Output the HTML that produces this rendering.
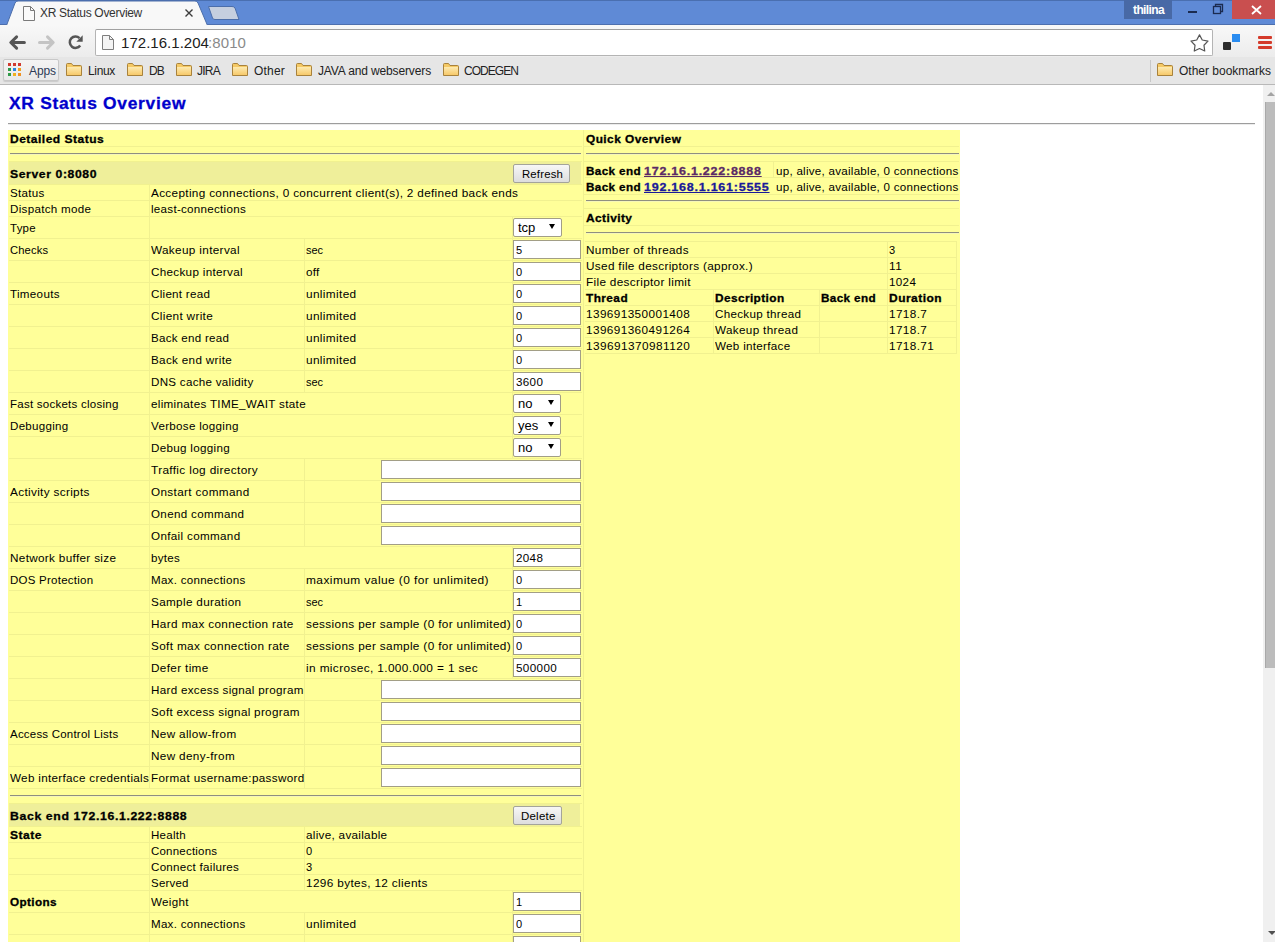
<!DOCTYPE html>
<html><head><meta charset="utf-8"><title>XR Status Overview</title>
<style>
html,body{margin:0;padding:0;width:1275px;height:942px;overflow:hidden;background:#fff}
body{position:relative;font-family:'Liberation Sans', sans-serif}
.t{position:absolute;white-space:pre;line-height:20px;font-family:'Liberation Sans', sans-serif;transform-origin:0 0}
.t.b{-webkit-text-stroke:0.3px currentColor}
</style></head><body>
<div style="position:absolute;left:8px;top:123px;width:1247px;height:1px;background:#9d9d9d"></div>
<div style="position:absolute;left:8px;top:124px;width:1247px;height:1px;background:#ececec"></div>
<div style="position:absolute;left:8px;top:130px;width:575px;height:812px;background:#ffff99"></div>
<div style="position:absolute;left:584px;top:130px;width:376px;height:812px;background:#ffff99"></div>
<div style="position:absolute;left:583px;top:130px;width:1px;height:812px;background:#f1f190"></div>
<div style="position:absolute;left:9px;top:146px;width:573px;height:1px;background:#f1f190"></div>
<div style="position:absolute;left:10px;top:153px;width:571px;height:1px;background:#8f8f80"></div>
<div style="position:absolute;left:10px;top:154px;width:571px;height:1px;background:#f6f6b8"></div>
<div style="position:absolute;left:9px;top:161px;width:573px;height:1px;background:#f1f190"></div>
<div style="position:absolute;left:9px;top:162px;width:572px;height:22px;background:#efef9a"></div>
<div style="position:absolute;left:513px;top:164px;width:55px;height:17px;border:1px solid #a4a49a;border-radius:2px;background:linear-gradient(#f7f7f7,#dddddd)"></div>
<div style="position:absolute;left:9px;top:184px;width:573px;height:1px;background:#f1f190"></div>
<div style="position:absolute;left:149px;top:184px;width:1px;height:16px;background:#f1f190"></div>
<div style="position:absolute;left:9px;top:200px;width:573px;height:1px;background:#f1f190"></div>
<div style="position:absolute;left:149px;top:200px;width:1px;height:16px;background:#f1f190"></div>
<div style="position:absolute;left:9px;top:216px;width:573px;height:1px;background:#f1f190"></div>
<div style="position:absolute;left:149px;top:216px;width:1px;height:22px;background:#f1f190"></div>
<div style="position:absolute;left:512px;top:216px;width:1px;height:22px;background:#f1f190"></div>
<div style="position:absolute;left:513px;top:218px;width:47px;height:17px;border:1px solid #a29e86;border-radius:2px;background:#fff"></div>
<div style="position:absolute;left:548.5px;top:224px;width:0;height:0;border-left:3.5px solid transparent;border-right:3.5px solid transparent;border-top:5.5px solid #000"></div>
<div style="position:absolute;left:9px;top:238px;width:573px;height:1px;background:#f1f190"></div>
<div style="position:absolute;left:149px;top:238px;width:1px;height:22px;background:#f1f190"></div>
<div style="position:absolute;left:304px;top:238px;width:1px;height:22px;background:#f1f190"></div>
<div style="position:absolute;left:512px;top:238px;width:1px;height:22px;background:#f1f190"></div>
<div style="position:absolute;left:513px;top:240px;width:66px;height:17px;border:1px solid #a29e86;background:#fff"></div>
<div style="position:absolute;left:9px;top:260px;width:573px;height:1px;background:#f1f190"></div>
<div style="position:absolute;left:149px;top:260px;width:1px;height:22px;background:#f1f190"></div>
<div style="position:absolute;left:304px;top:260px;width:1px;height:22px;background:#f1f190"></div>
<div style="position:absolute;left:512px;top:260px;width:1px;height:22px;background:#f1f190"></div>
<div style="position:absolute;left:513px;top:262px;width:66px;height:17px;border:1px solid #a29e86;background:#fff"></div>
<div style="position:absolute;left:9px;top:282px;width:573px;height:1px;background:#f1f190"></div>
<div style="position:absolute;left:149px;top:282px;width:1px;height:22px;background:#f1f190"></div>
<div style="position:absolute;left:304px;top:282px;width:1px;height:22px;background:#f1f190"></div>
<div style="position:absolute;left:512px;top:282px;width:1px;height:22px;background:#f1f190"></div>
<div style="position:absolute;left:513px;top:284px;width:66px;height:17px;border:1px solid #a29e86;background:#fff"></div>
<div style="position:absolute;left:9px;top:304px;width:573px;height:1px;background:#f1f190"></div>
<div style="position:absolute;left:149px;top:304px;width:1px;height:22px;background:#f1f190"></div>
<div style="position:absolute;left:304px;top:304px;width:1px;height:22px;background:#f1f190"></div>
<div style="position:absolute;left:512px;top:304px;width:1px;height:22px;background:#f1f190"></div>
<div style="position:absolute;left:513px;top:306px;width:66px;height:17px;border:1px solid #a29e86;background:#fff"></div>
<div style="position:absolute;left:9px;top:326px;width:573px;height:1px;background:#f1f190"></div>
<div style="position:absolute;left:149px;top:326px;width:1px;height:22px;background:#f1f190"></div>
<div style="position:absolute;left:304px;top:326px;width:1px;height:22px;background:#f1f190"></div>
<div style="position:absolute;left:512px;top:326px;width:1px;height:22px;background:#f1f190"></div>
<div style="position:absolute;left:513px;top:328px;width:66px;height:17px;border:1px solid #a29e86;background:#fff"></div>
<div style="position:absolute;left:9px;top:348px;width:573px;height:1px;background:#f1f190"></div>
<div style="position:absolute;left:149px;top:348px;width:1px;height:22px;background:#f1f190"></div>
<div style="position:absolute;left:304px;top:348px;width:1px;height:22px;background:#f1f190"></div>
<div style="position:absolute;left:512px;top:348px;width:1px;height:22px;background:#f1f190"></div>
<div style="position:absolute;left:513px;top:350px;width:66px;height:17px;border:1px solid #a29e86;background:#fff"></div>
<div style="position:absolute;left:9px;top:370px;width:573px;height:1px;background:#f1f190"></div>
<div style="position:absolute;left:149px;top:370px;width:1px;height:22px;background:#f1f190"></div>
<div style="position:absolute;left:304px;top:370px;width:1px;height:22px;background:#f1f190"></div>
<div style="position:absolute;left:512px;top:370px;width:1px;height:22px;background:#f1f190"></div>
<div style="position:absolute;left:513px;top:372px;width:66px;height:17px;border:1px solid #a29e86;background:#fff"></div>
<div style="position:absolute;left:9px;top:392px;width:573px;height:1px;background:#f1f190"></div>
<div style="position:absolute;left:149px;top:392px;width:1px;height:22px;background:#f1f190"></div>
<div style="position:absolute;left:512px;top:392px;width:1px;height:22px;background:#f1f190"></div>
<div style="position:absolute;left:513px;top:394px;width:46px;height:17px;border:1px solid #a29e86;border-radius:2px;background:#fff"></div>
<div style="position:absolute;left:547.5px;top:400px;width:0;height:0;border-left:3.5px solid transparent;border-right:3.5px solid transparent;border-top:5.5px solid #000"></div>
<div style="position:absolute;left:9px;top:414px;width:573px;height:1px;background:#f1f190"></div>
<div style="position:absolute;left:149px;top:414px;width:1px;height:22px;background:#f1f190"></div>
<div style="position:absolute;left:512px;top:414px;width:1px;height:22px;background:#f1f190"></div>
<div style="position:absolute;left:513px;top:416px;width:46px;height:17px;border:1px solid #a29e86;border-radius:2px;background:#fff"></div>
<div style="position:absolute;left:547.5px;top:422px;width:0;height:0;border-left:3.5px solid transparent;border-right:3.5px solid transparent;border-top:5.5px solid #000"></div>
<div style="position:absolute;left:9px;top:436px;width:573px;height:1px;background:#f1f190"></div>
<div style="position:absolute;left:149px;top:436px;width:1px;height:22px;background:#f1f190"></div>
<div style="position:absolute;left:512px;top:436px;width:1px;height:22px;background:#f1f190"></div>
<div style="position:absolute;left:513px;top:438px;width:46px;height:17px;border:1px solid #a29e86;border-radius:2px;background:#fff"></div>
<div style="position:absolute;left:547.5px;top:444px;width:0;height:0;border-left:3.5px solid transparent;border-right:3.5px solid transparent;border-top:5.5px solid #000"></div>
<div style="position:absolute;left:9px;top:458px;width:573px;height:1px;background:#f1f190"></div>
<div style="position:absolute;left:149px;top:458px;width:1px;height:22px;background:#f1f190"></div>
<div style="position:absolute;left:304px;top:458px;width:1px;height:22px;background:#f1f190"></div>
<div style="position:absolute;left:381px;top:460px;width:198px;height:17px;border:1px solid #a29e86;background:#fff"></div>
<div style="position:absolute;left:9px;top:480px;width:573px;height:1px;background:#f1f190"></div>
<div style="position:absolute;left:149px;top:480px;width:1px;height:22px;background:#f1f190"></div>
<div style="position:absolute;left:304px;top:480px;width:1px;height:22px;background:#f1f190"></div>
<div style="position:absolute;left:381px;top:482px;width:198px;height:17px;border:1px solid #a29e86;background:#fff"></div>
<div style="position:absolute;left:9px;top:502px;width:573px;height:1px;background:#f1f190"></div>
<div style="position:absolute;left:149px;top:502px;width:1px;height:22px;background:#f1f190"></div>
<div style="position:absolute;left:304px;top:502px;width:1px;height:22px;background:#f1f190"></div>
<div style="position:absolute;left:381px;top:504px;width:198px;height:17px;border:1px solid #a29e86;background:#fff"></div>
<div style="position:absolute;left:9px;top:524px;width:573px;height:1px;background:#f1f190"></div>
<div style="position:absolute;left:149px;top:524px;width:1px;height:22px;background:#f1f190"></div>
<div style="position:absolute;left:304px;top:524px;width:1px;height:22px;background:#f1f190"></div>
<div style="position:absolute;left:381px;top:526px;width:198px;height:17px;border:1px solid #a29e86;background:#fff"></div>
<div style="position:absolute;left:9px;top:546px;width:573px;height:1px;background:#f1f190"></div>
<div style="position:absolute;left:149px;top:546px;width:1px;height:22px;background:#f1f190"></div>
<div style="position:absolute;left:512px;top:546px;width:1px;height:22px;background:#f1f190"></div>
<div style="position:absolute;left:513px;top:548px;width:66px;height:17px;border:1px solid #a29e86;background:#fff"></div>
<div style="position:absolute;left:9px;top:568px;width:573px;height:1px;background:#f1f190"></div>
<div style="position:absolute;left:149px;top:568px;width:1px;height:22px;background:#f1f190"></div>
<div style="position:absolute;left:304px;top:568px;width:1px;height:22px;background:#f1f190"></div>
<div style="position:absolute;left:512px;top:568px;width:1px;height:22px;background:#f1f190"></div>
<div style="position:absolute;left:513px;top:570px;width:66px;height:17px;border:1px solid #a29e86;background:#fff"></div>
<div style="position:absolute;left:9px;top:590px;width:573px;height:1px;background:#f1f190"></div>
<div style="position:absolute;left:149px;top:590px;width:1px;height:22px;background:#f1f190"></div>
<div style="position:absolute;left:304px;top:590px;width:1px;height:22px;background:#f1f190"></div>
<div style="position:absolute;left:512px;top:590px;width:1px;height:22px;background:#f1f190"></div>
<div style="position:absolute;left:513px;top:592px;width:66px;height:17px;border:1px solid #a29e86;background:#fff"></div>
<div style="position:absolute;left:9px;top:612px;width:573px;height:1px;background:#f1f190"></div>
<div style="position:absolute;left:149px;top:612px;width:1px;height:22px;background:#f1f190"></div>
<div style="position:absolute;left:304px;top:612px;width:1px;height:22px;background:#f1f190"></div>
<div style="position:absolute;left:512px;top:612px;width:1px;height:22px;background:#f1f190"></div>
<div style="position:absolute;left:513px;top:614px;width:66px;height:17px;border:1px solid #a29e86;background:#fff"></div>
<div style="position:absolute;left:9px;top:634px;width:573px;height:1px;background:#f1f190"></div>
<div style="position:absolute;left:149px;top:634px;width:1px;height:22px;background:#f1f190"></div>
<div style="position:absolute;left:304px;top:634px;width:1px;height:22px;background:#f1f190"></div>
<div style="position:absolute;left:512px;top:634px;width:1px;height:22px;background:#f1f190"></div>
<div style="position:absolute;left:513px;top:636px;width:66px;height:17px;border:1px solid #a29e86;background:#fff"></div>
<div style="position:absolute;left:9px;top:656px;width:573px;height:1px;background:#f1f190"></div>
<div style="position:absolute;left:149px;top:656px;width:1px;height:22px;background:#f1f190"></div>
<div style="position:absolute;left:304px;top:656px;width:1px;height:22px;background:#f1f190"></div>
<div style="position:absolute;left:512px;top:656px;width:1px;height:22px;background:#f1f190"></div>
<div style="position:absolute;left:513px;top:658px;width:66px;height:17px;border:1px solid #a29e86;background:#fff"></div>
<div style="position:absolute;left:9px;top:678px;width:573px;height:1px;background:#f1f190"></div>
<div style="position:absolute;left:149px;top:678px;width:1px;height:22px;background:#f1f190"></div>
<div style="position:absolute;left:304px;top:678px;width:1px;height:22px;background:#f1f190"></div>
<div style="position:absolute;left:381px;top:680px;width:198px;height:17px;border:1px solid #a29e86;background:#fff"></div>
<div style="position:absolute;left:9px;top:700px;width:573px;height:1px;background:#f1f190"></div>
<div style="position:absolute;left:149px;top:700px;width:1px;height:22px;background:#f1f190"></div>
<div style="position:absolute;left:304px;top:700px;width:1px;height:22px;background:#f1f190"></div>
<div style="position:absolute;left:381px;top:702px;width:198px;height:17px;border:1px solid #a29e86;background:#fff"></div>
<div style="position:absolute;left:9px;top:722px;width:573px;height:1px;background:#f1f190"></div>
<div style="position:absolute;left:149px;top:722px;width:1px;height:22px;background:#f1f190"></div>
<div style="position:absolute;left:304px;top:722px;width:1px;height:22px;background:#f1f190"></div>
<div style="position:absolute;left:381px;top:724px;width:198px;height:17px;border:1px solid #a29e86;background:#fff"></div>
<div style="position:absolute;left:9px;top:744px;width:573px;height:1px;background:#f1f190"></div>
<div style="position:absolute;left:149px;top:744px;width:1px;height:22px;background:#f1f190"></div>
<div style="position:absolute;left:304px;top:744px;width:1px;height:22px;background:#f1f190"></div>
<div style="position:absolute;left:381px;top:746px;width:198px;height:17px;border:1px solid #a29e86;background:#fff"></div>
<div style="position:absolute;left:9px;top:766px;width:573px;height:1px;background:#f1f190"></div>
<div style="position:absolute;left:149px;top:766px;width:1px;height:22px;background:#f1f190"></div>
<div style="position:absolute;left:304px;top:766px;width:1px;height:22px;background:#f1f190"></div>
<div style="position:absolute;left:381px;top:768px;width:198px;height:17px;border:1px solid #a29e86;background:#fff"></div>
<div style="position:absolute;left:9px;top:788px;width:573px;height:1px;background:#f1f190"></div>
<div style="position:absolute;left:10px;top:795px;width:571px;height:1px;background:#8f8f80"></div>
<div style="position:absolute;left:10px;top:796px;width:571px;height:1px;background:#f6f6b8"></div>
<div style="position:absolute;left:9px;top:803px;width:573px;height:1px;background:#f1f190"></div>
<div style="position:absolute;left:9px;top:804px;width:571px;height:22px;background:#efef9a"></div>
<div style="position:absolute;left:513px;top:806px;width:47px;height:17px;border:1px solid #a4a49a;border-radius:2px;background:linear-gradient(#f7f7f7,#dddddd)"></div>
<div style="position:absolute;left:9px;top:826px;width:573px;height:1px;background:#f1f190"></div>
<div style="position:absolute;left:149px;top:826px;width:1px;height:16px;background:#f1f190"></div>
<div style="position:absolute;left:304px;top:826px;width:1px;height:16px;background:#f1f190"></div>
<div style="position:absolute;left:9px;top:842px;width:573px;height:1px;background:#f1f190"></div>
<div style="position:absolute;left:149px;top:842px;width:1px;height:16px;background:#f1f190"></div>
<div style="position:absolute;left:304px;top:842px;width:1px;height:16px;background:#f1f190"></div>
<div style="position:absolute;left:9px;top:858px;width:573px;height:1px;background:#f1f190"></div>
<div style="position:absolute;left:149px;top:858px;width:1px;height:16px;background:#f1f190"></div>
<div style="position:absolute;left:304px;top:858px;width:1px;height:16px;background:#f1f190"></div>
<div style="position:absolute;left:9px;top:874px;width:573px;height:1px;background:#f1f190"></div>
<div style="position:absolute;left:149px;top:874px;width:1px;height:16px;background:#f1f190"></div>
<div style="position:absolute;left:304px;top:874px;width:1px;height:16px;background:#f1f190"></div>
<div style="position:absolute;left:9px;top:890px;width:573px;height:1px;background:#f1f190"></div>
<div style="position:absolute;left:149px;top:890px;width:1px;height:22px;background:#f1f190"></div>
<div style="position:absolute;left:512px;top:890px;width:1px;height:22px;background:#f1f190"></div>
<div style="position:absolute;left:513px;top:892px;width:66px;height:17px;border:1px solid #a29e86;background:#fff"></div>
<div style="position:absolute;left:9px;top:912px;width:573px;height:1px;background:#f1f190"></div>
<div style="position:absolute;left:149px;top:912px;width:1px;height:22px;background:#f1f190"></div>
<div style="position:absolute;left:304px;top:912px;width:1px;height:22px;background:#f1f190"></div>
<div style="position:absolute;left:512px;top:912px;width:1px;height:22px;background:#f1f190"></div>
<div style="position:absolute;left:513px;top:914px;width:66px;height:17px;border:1px solid #a29e86;background:#fff"></div>
<div style="position:absolute;left:9px;top:934px;width:573px;height:1px;background:#f1f190"></div>
<div style="position:absolute;left:149px;top:934px;width:1px;height:22px;background:#f1f190"></div>
<div style="position:absolute;left:304px;top:934px;width:1px;height:22px;background:#f1f190"></div>
<div style="position:absolute;left:512px;top:934px;width:1px;height:22px;background:#f1f190"></div>
<div style="position:absolute;left:513px;top:936px;width:66px;height:17px;border:1px solid #a29e86;background:#fff"></div>
<div style="position:absolute;left:584px;top:146px;width:375px;height:1px;background:#f1f190"></div>
<div style="position:absolute;left:586px;top:153px;width:373px;height:1px;background:#8f8f80"></div>
<div style="position:absolute;left:586px;top:154px;width:373px;height:1px;background:#f6f6b8"></div>
<div style="position:absolute;left:584px;top:161px;width:375px;height:1px;background:#f1f190"></div>
<div style="position:absolute;left:585px;top:177px;width:373px;height:1px;background:#f1f190"></div>
<div style="position:absolute;left:773px;top:162px;width:1px;height:16px;background:#f1f190"></div>
<div style="position:absolute;left:584px;top:194px;width:375px;height:1px;background:#f1f190"></div>
<div style="position:absolute;left:586px;top:200px;width:373px;height:1px;background:#8f8f80"></div>
<div style="position:absolute;left:586px;top:201px;width:373px;height:1px;background:#f6f6b8"></div>
<div style="position:absolute;left:584px;top:208px;width:375px;height:1px;background:#f1f190"></div>
<div style="position:absolute;left:584px;top:225px;width:375px;height:1px;background:#f1f190"></div>
<div style="position:absolute;left:586px;top:232px;width:373px;height:1px;background:#8f8f80"></div>
<div style="position:absolute;left:586px;top:233px;width:373px;height:1px;background:#f6f6b8"></div>
<div style="position:absolute;left:585px;top:241px;width:372px;height:1px;background:#f1f190"></div>
<div style="position:absolute;left:585px;top:257px;width:372px;height:1px;background:#f1f190"></div>
<div style="position:absolute;left:585px;top:273px;width:372px;height:1px;background:#f1f190"></div>
<div style="position:absolute;left:585px;top:289px;width:372px;height:1px;background:#f1f190"></div>
<div style="position:absolute;left:585px;top:305px;width:372px;height:1px;background:#f1f190"></div>
<div style="position:absolute;left:585px;top:321px;width:372px;height:1px;background:#f1f190"></div>
<div style="position:absolute;left:585px;top:337px;width:372px;height:1px;background:#f1f190"></div>
<div style="position:absolute;left:585px;top:353px;width:372px;height:1px;background:#f1f190"></div>
<div style="position:absolute;left:887px;top:241px;width:1px;height:112px;background:#f1f190"></div>
<div style="position:absolute;left:956px;top:241px;width:1px;height:112px;background:#f1f190"></div>
<div style="position:absolute;left:713px;top:289px;width:1px;height:64px;background:#f1f190"></div>
<div style="position:absolute;left:819px;top:289px;width:1px;height:64px;background:#f1f190"></div>
<div style="position:absolute;left:1263px;top:85px;width:12px;height:857px;background:#f0f0f0"></div>
<div style="position:absolute;left:1265px;top:102px;width:10px;height:566px;background:#bcbcbc;border-left:1px solid #a9a9a9;box-sizing:border-box"></div>
<div style="position:absolute;left:1267px;top:92px;width:0;height:0;border-left:4px solid transparent;border-right:4px solid transparent;border-bottom:4px solid #a3a3a3"></div>
<div style="position:absolute;left:1268px;top:931px;width:0;height:0;border-left:4px solid transparent;border-right:4px solid transparent;border-top:4px solid #505050"></div>
<div style="position:absolute;left:0px;top:0px;width:1275px;height:25px;background:#5f8ad6"></div>
<div style="position:absolute;left:0px;top:0px;width:1275px;height:1px;background:#4a6fb0"></div>
<div style="position:absolute;left:0px;top:24px;width:1275px;height:1px;background:#4d6fae"></div>
<div style="position:absolute;left:0px;top:25px;width:1275px;height:32px;background:linear-gradient(#f8f8f8,#ececec)"></div>
<svg style="position:absolute;left:0;top:0" width="260" height="26">
<path d="M6.5,25.5 L15,3 Q16,1 18,1 L195,1 Q197,1 198,3 L207.5,25.5 Z" fill="#f8f8f8" stroke="#4c6eaa" stroke-width="1"/>
<rect x="0" y="25" width="260" height="1" fill="#f8f8f8"/>
<path d="M208.5,6.5 L232,6.5 Q234,6.5 235,8 L239,19.5 L215,19.5 Q213,19.5 212.5,18 Z" fill="#c6cfdf" stroke="#4c6eaa" stroke-width="1"/>
</svg>
<svg style="position:absolute;left:22px;top:5px" width="14" height="17">
<path d="M1.5,1.5 L8.5,1.5 L12.5,5.5 L12.5,15.5 L1.5,15.5 Z" fill="#fafafa" stroke="#7a7a7a" stroke-width="1"/>
<path d="M8.5,1.5 L8.5,5.5 L12.5,5.5" fill="none" stroke="#7a7a7a" stroke-width="1"/>
</svg>
<svg style="position:absolute;left:184px;top:8px" width="10" height="10">
<path d="M1.5,1.5 L8.5,8.5 M8.5,1.5 L1.5,8.5" stroke="#3c3c3c" stroke-width="1.4"/>
</svg>
<div style="position:absolute;left:1124px;top:0px;width:48px;height:19px;background:#4869a6"></div>
<div style="position:absolute;left:1188px;top:11px;width:9px;height:2px;background:#1b2b50"></div>
<svg style="position:absolute;left:1212px;top:3px" width="12" height="12">
<rect x="1.5" y="3.5" width="7" height="7" fill="none" stroke="#1b2b50" stroke-width="1.3"/>
<path d="M3.5,3.5 L3.5,1.5 L10.5,1.5 L10.5,8.5 L8.5,8.5" fill="none" stroke="#1b2b50" stroke-width="1.3"/>
</svg>
<div style="position:absolute;left:1232px;top:0px;width:43px;height:19px;background:#c94f4f"></div>
<svg style="position:absolute;left:1250px;top:5px" width="13" height="10">
<path d="M2,1 L11,9 M11,1 L2,9" stroke="#fff" stroke-width="1.8"/>
</svg>
<svg style="position:absolute;left:0px;top:30px" width="100" height="25">
<path d="M24.4,12.5 L11.5,12.5 M16.6,6.9 L10.8,12.5 L16.6,18.1" fill="none" stroke="#555" stroke-width="3" stroke-linecap="round" stroke-linejoin="round"/>
<path d="M39.5,12.5 L52.4,12.5 M47.5,6.9 L53.2,12.5 L47.5,18.1" fill="none" stroke="#c4c4c4" stroke-width="3" stroke-linecap="round" stroke-linejoin="round"/>
<path d="M80.17,15.47 A5.7,5.7 0 1 1 79.53,8.17" fill="none" stroke="#555" stroke-width="2.5"/>
<path d="M82.7,5.2 L82.7,11.7 L76.3,11.7 Z" fill="#555"/>
</svg>
<div style="position:absolute;left:95px;top:29px;width:1116px;height:25px;border:1px solid #b4b4b4;border-top-color:#a0a0a0;border-radius:2px;background:#fff"></div>
<svg style="position:absolute;left:101px;top:35px" width="14" height="16">
<path d="M1.5,0.5 L8.5,0.5 L12.5,4.5 L12.5,14.5 L1.5,14.5 Z" fill="#f4f4f4" stroke="#7e7e7e" stroke-width="1"/>
<path d="M8.5,0.5 L8.5,4.5 L12.5,4.5" fill="none" stroke="#7e7e7e" stroke-width="1"/>
</svg>
<svg style="position:absolute;left:1189px;top:33px" width="21" height="21">
<path d="M10.50,1.90 L13.26,7.00 L18.96,8.05 L14.97,12.25 L15.73,18.00 L10.50,15.50 L5.27,18.00 L6.03,12.25 L2.04,8.05 L7.74,7.00 Z" fill="#fff" stroke="#555" stroke-width="1.2" stroke-linejoin="round"/>
</svg>
<div style="position:absolute;left:1223px;top:42px;width:8px;height:8px;background:#2c2c2c;border-radius:1px"></div>
<div style="position:absolute;left:1232px;top:34px;width:8px;height:8px;background:#2a8cf0"></div>
<div style="position:absolute;left:1258px;top:36px;width:14px;height:2.5px;background:#d43a2a;border-radius:1px"></div>
<div style="position:absolute;left:1258px;top:41px;width:14px;height:2.5px;background:#d43a2a;border-radius:1px"></div>
<div style="position:absolute;left:1258px;top:46px;width:14px;height:2.5px;background:#d43a2a;border-radius:1px"></div>
<div style="position:absolute;left:0px;top:57px;width:1275px;height:27px;background:#e6e6e6"></div>
<div style="position:absolute;left:0px;top:84px;width:1275px;height:1px;background:#b8b8b8"></div>
<div style="position:absolute;left:3px;top:59px;width:54px;height:20px;border:1px solid #c8c8c8;border-radius:2px;background:linear-gradient(#f4f4f4,#e9e9e9);box-shadow:0 1px 1px rgba(0,0,0,0.12)"></div>
<div style="position:absolute;left:8px;top:63px;width:3px;height:3px;background:#d13b30"></div>
<div style="position:absolute;left:13px;top:63px;width:3px;height:3px;background:#d13b30"></div>
<div style="position:absolute;left:18px;top:63px;width:3px;height:3px;background:#d13b30"></div>
<div style="position:absolute;left:8px;top:68px;width:3px;height:3px;background:#2f9a48"></div>
<div style="position:absolute;left:13px;top:68px;width:3px;height:3px;background:#2a86e0"></div>
<div style="position:absolute;left:18px;top:68px;width:3px;height:3px;background:#f0a020"></div>
<div style="position:absolute;left:8px;top:73px;width:3px;height:3px;background:#2f9a48"></div>
<div style="position:absolute;left:13px;top:73px;width:3px;height:3px;background:#f0b020"></div>
<div style="position:absolute;left:18px;top:73px;width:3px;height:3px;background:#f09020"></div>
<svg style="position:absolute;left:66px;top:62px" width="17" height="15">
<path d="M0.5,2.5 Q0.5,1.5 1.5,1.5 L5.5,1.5 L7,3.5 L14.5,3.5 Q15.5,3.5 15.5,4.5 L15.5,13.5 L0.5,13.5 Z" fill="#f5c965" stroke="#a8823c" stroke-width="1"/>
<defs><linearGradient id="fg" x1="0" y1="0" x2="0" y2="1"><stop offset="0" stop-color="#fdeab0"/><stop offset="1" stop-color="#f7c96a"/></linearGradient></defs><rect x="1" y="5" width="14" height="8" fill="url(#fg)"/>
</svg>
<svg style="position:absolute;left:127px;top:62px" width="17" height="15">
<path d="M0.5,2.5 Q0.5,1.5 1.5,1.5 L5.5,1.5 L7,3.5 L14.5,3.5 Q15.5,3.5 15.5,4.5 L15.5,13.5 L0.5,13.5 Z" fill="#f5c965" stroke="#a8823c" stroke-width="1"/>
<defs><linearGradient id="fg" x1="0" y1="0" x2="0" y2="1"><stop offset="0" stop-color="#fdeab0"/><stop offset="1" stop-color="#f7c96a"/></linearGradient></defs><rect x="1" y="5" width="14" height="8" fill="url(#fg)"/>
</svg>
<svg style="position:absolute;left:176px;top:62px" width="17" height="15">
<path d="M0.5,2.5 Q0.5,1.5 1.5,1.5 L5.5,1.5 L7,3.5 L14.5,3.5 Q15.5,3.5 15.5,4.5 L15.5,13.5 L0.5,13.5 Z" fill="#f5c965" stroke="#a8823c" stroke-width="1"/>
<defs><linearGradient id="fg" x1="0" y1="0" x2="0" y2="1"><stop offset="0" stop-color="#fdeab0"/><stop offset="1" stop-color="#f7c96a"/></linearGradient></defs><rect x="1" y="5" width="14" height="8" fill="url(#fg)"/>
</svg>
<svg style="position:absolute;left:232px;top:62px" width="17" height="15">
<path d="M0.5,2.5 Q0.5,1.5 1.5,1.5 L5.5,1.5 L7,3.5 L14.5,3.5 Q15.5,3.5 15.5,4.5 L15.5,13.5 L0.5,13.5 Z" fill="#f5c965" stroke="#a8823c" stroke-width="1"/>
<defs><linearGradient id="fg" x1="0" y1="0" x2="0" y2="1"><stop offset="0" stop-color="#fdeab0"/><stop offset="1" stop-color="#f7c96a"/></linearGradient></defs><rect x="1" y="5" width="14" height="8" fill="url(#fg)"/>
</svg>
<svg style="position:absolute;left:296px;top:62px" width="17" height="15">
<path d="M0.5,2.5 Q0.5,1.5 1.5,1.5 L5.5,1.5 L7,3.5 L14.5,3.5 Q15.5,3.5 15.5,4.5 L15.5,13.5 L0.5,13.5 Z" fill="#f5c965" stroke="#a8823c" stroke-width="1"/>
<defs><linearGradient id="fg" x1="0" y1="0" x2="0" y2="1"><stop offset="0" stop-color="#fdeab0"/><stop offset="1" stop-color="#f7c96a"/></linearGradient></defs><rect x="1" y="5" width="14" height="8" fill="url(#fg)"/>
</svg>
<svg style="position:absolute;left:443px;top:62px" width="17" height="15">
<path d="M0.5,2.5 Q0.5,1.5 1.5,1.5 L5.5,1.5 L7,3.5 L14.5,3.5 Q15.5,3.5 15.5,4.5 L15.5,13.5 L0.5,13.5 Z" fill="#f5c965" stroke="#a8823c" stroke-width="1"/>
<defs><linearGradient id="fg" x1="0" y1="0" x2="0" y2="1"><stop offset="0" stop-color="#fdeab0"/><stop offset="1" stop-color="#f7c96a"/></linearGradient></defs><rect x="1" y="5" width="14" height="8" fill="url(#fg)"/>
</svg>
<svg style="position:absolute;left:1157px;top:62px" width="17" height="15">
<path d="M0.5,2.5 Q0.5,1.5 1.5,1.5 L5.5,1.5 L7,3.5 L14.5,3.5 Q15.5,3.5 15.5,4.5 L15.5,13.5 L0.5,13.5 Z" fill="#f5c965" stroke="#a8823c" stroke-width="1"/>
<defs><linearGradient id="fg" x1="0" y1="0" x2="0" y2="1"><stop offset="0" stop-color="#fdeab0"/><stop offset="1" stop-color="#f7c96a"/></linearGradient></defs><rect x="1" y="5" width="14" height="8" fill="url(#fg)"/>
</svg>
<div style="position:absolute;left:1150px;top:60px;width:1px;height:22px;background:#c8c8c8"></div>
<div class="t b" style="left:8.8px;top:94px;font-size:16px;font-weight:bold;color:#0000cc;transform:scaleX(1.0859);letter-spacing:0.664px;">XR Status Overview</div>
<div class="t b" style="left:10px;top:129px;font-size:11px;font-weight:bold;color:#000;transform:scaleX(1.0929);letter-spacing:0.450px;">Detailed Status</div>
<div class="t b" style="left:10px;top:164px;font-size:11px;font-weight:bold;color:#000;transform:scaleX(1.1080);letter-spacing:0.537px;">Server 0:8080</div>
<div class="t" style="left:522px;top:164px;font-size:11px;font-weight:normal;color:#000;transform:scaleX(1.0318);letter-spacing:0.170px;">Refresh</div>
<div class="t" style="left:10px;top:183px;font-size:11px;font-weight:normal;color:#000;transform:scaleX(1.0537);letter-spacing:0.265px;">Status</div>
<div class="t" style="left:151px;top:183px;font-size:11px;font-weight:normal;color:#000;transform:scaleX(1.0677);letter-spacing:0.311px;">Accepting connections, 0 concurrent client(s), 2 defined back ends</div>
<div class="t" style="left:10px;top:199px;font-size:11px;font-weight:normal;color:#000;transform:scaleX(1.0545);letter-spacing:0.292px;">Dispatch mode</div>
<div class="t" style="left:151px;top:199px;font-size:11px;font-weight:normal;color:#000;transform:scaleX(1.0548);letter-spacing:0.262px;">least-connections</div>
<div class="t" style="left:10px;top:218px;font-size:11px;font-weight:normal;color:#000;transform:scaleX(1.0425);letter-spacing:0.243px;">Type</div>
<div class="t" style="left:518px;top:218px;font-size:13px;font-weight:normal;color:#000;transform:scaleX(1.0000);letter-spacing:0.000px;">tcp</div>
<div class="t" style="left:10px;top:240px;font-size:11px;font-weight:normal;color:#000;transform:scaleX(1.0198);letter-spacing:0.119px;">Checks</div>
<div class="t" style="left:151px;top:240px;font-size:11px;font-weight:normal;color:#000;transform:scaleX(1.0667);letter-spacing:0.327px;">Wakeup interval</div>
<div class="t" style="left:306px;top:240px;font-size:11px;font-weight:normal;color:#000;transform:scaleX(0.9967);letter-spacing:-0.019px;">sec</div>
<div class="t" style="left:516px;top:240px;font-size:11px;font-weight:normal;color:#000;transform:scaleX(1.0060);letter-spacing:0.037px;">5</div>
<div class="t" style="left:151px;top:262px;font-size:11px;font-weight:normal;color:#000;transform:scaleX(1.0605);letter-spacing:0.292px;">Checkup interval</div>
<div class="t" style="left:306px;top:262px;font-size:11px;font-weight:normal;color:#000;transform:scaleX(1.0656);letter-spacing:0.247px;">off</div>
<div class="t" style="left:516px;top:262px;font-size:11px;font-weight:normal;color:#000;transform:scaleX(1.0060);letter-spacing:0.037px;">0</div>
<div class="t" style="left:10px;top:284px;font-size:11px;font-weight:normal;color:#000;transform:scaleX(1.0556);letter-spacing:0.295px;">Timeouts</div>
<div class="t" style="left:151px;top:284px;font-size:11px;font-weight:normal;color:#000;transform:scaleX(1.0565);letter-spacing:0.259px;">Client read</div>
<div class="t" style="left:306px;top:284px;font-size:11px;font-weight:normal;color:#000;transform:scaleX(1.0742);letter-spacing:0.338px;">unlimited</div>
<div class="t" style="left:516px;top:284px;font-size:11px;font-weight:normal;color:#000;transform:scaleX(1.0060);letter-spacing:0.037px;">0</div>
<div class="t" style="left:151px;top:306px;font-size:11px;font-weight:normal;color:#000;transform:scaleX(1.0700);letter-spacing:0.297px;">Client write</div>
<div class="t" style="left:306px;top:306px;font-size:11px;font-weight:normal;color:#000;transform:scaleX(1.0742);letter-spacing:0.338px;">unlimited</div>
<div class="t" style="left:516px;top:306px;font-size:11px;font-weight:normal;color:#000;transform:scaleX(1.0060);letter-spacing:0.037px;">0</div>
<div class="t" style="left:151px;top:328px;font-size:11px;font-weight:normal;color:#000;transform:scaleX(1.0516);letter-spacing:0.268px;">Back end read</div>
<div class="t" style="left:306px;top:328px;font-size:11px;font-weight:normal;color:#000;transform:scaleX(1.0742);letter-spacing:0.338px;">unlimited</div>
<div class="t" style="left:516px;top:328px;font-size:11px;font-weight:normal;color:#000;transform:scaleX(1.0060);letter-spacing:0.037px;">0</div>
<div class="t" style="left:151px;top:350px;font-size:11px;font-weight:normal;color:#000;transform:scaleX(1.0618);letter-spacing:0.300px;">Back end write</div>
<div class="t" style="left:306px;top:350px;font-size:11px;font-weight:normal;color:#000;transform:scaleX(1.0742);letter-spacing:0.338px;">unlimited</div>
<div class="t" style="left:516px;top:350px;font-size:11px;font-weight:normal;color:#000;transform:scaleX(1.0060);letter-spacing:0.037px;">0</div>
<div class="t" style="left:151px;top:372px;font-size:11px;font-weight:normal;color:#000;transform:scaleX(1.0550);letter-spacing:0.267px;">DNS cache validity</div>
<div class="t" style="left:306px;top:372px;font-size:11px;font-weight:normal;color:#000;transform:scaleX(0.9967);letter-spacing:-0.019px;">sec</div>
<div class="t" style="left:516px;top:372px;font-size:11px;font-weight:normal;color:#000;transform:scaleX(1.0553);letter-spacing:0.321px;">3600</div>
<div class="t" style="left:10px;top:394px;font-size:11px;font-weight:normal;color:#000;transform:scaleX(1.0480);letter-spacing:0.227px;">Fast sockets closing</div>
<div class="t" style="left:151px;top:394px;font-size:11px;font-weight:normal;color:#000;transform:scaleX(1.0591);letter-spacing:0.297px;">eliminates TIME_WAIT state</div>
<div class="t" style="left:518px;top:394px;font-size:13px;font-weight:normal;color:#000;transform:scaleX(1.0000);letter-spacing:0.000px;">no</div>
<div class="t" style="left:10px;top:416px;font-size:11px;font-weight:normal;color:#000;transform:scaleX(1.0502);letter-spacing:0.283px;">Debugging</div>
<div class="t" style="left:151px;top:416px;font-size:11px;font-weight:normal;color:#000;transform:scaleX(1.0554);letter-spacing:0.276px;">Verbose logging</div>
<div class="t" style="left:518px;top:416px;font-size:13px;font-weight:normal;color:#000;transform:scaleX(1.0000);letter-spacing:0.000px;">yes</div>
<div class="t" style="left:151px;top:438px;font-size:11px;font-weight:normal;color:#000;transform:scaleX(1.0567);letter-spacing:0.293px;">Debug logging</div>
<div class="t" style="left:518px;top:438px;font-size:13px;font-weight:normal;color:#000;transform:scaleX(1.0000);letter-spacing:0.000px;">no</div>
<div class="t" style="left:151px;top:460px;font-size:11px;font-weight:normal;color:#000;transform:scaleX(1.0763);letter-spacing:0.314px;">Traffic log directory</div>
<div class="t" style="left:10px;top:482px;font-size:11px;font-weight:normal;color:#000;transform:scaleX(1.0727);letter-spacing:0.295px;">Activity scripts</div>
<div class="t" style="left:151px;top:482px;font-size:11px;font-weight:normal;color:#000;transform:scaleX(1.0635);letter-spacing:0.348px;">Onstart command</div>
<div class="t" style="left:151px;top:504px;font-size:11px;font-weight:normal;color:#000;transform:scaleX(1.0526);letter-spacing:0.325px;">Onend command</div>
<div class="t" style="left:151px;top:526px;font-size:11px;font-weight:normal;color:#000;transform:scaleX(1.0585);letter-spacing:0.316px;">Onfail command</div>
<div class="t" style="left:10px;top:548px;font-size:11px;font-weight:normal;color:#000;transform:scaleX(1.0657);letter-spacing:0.305px;">Network buffer size</div>
<div class="t" style="left:151px;top:548px;font-size:11px;font-weight:normal;color:#000;transform:scaleX(1.0508);letter-spacing:0.254px;">bytes</div>
<div class="t" style="left:516px;top:548px;font-size:11px;font-weight:normal;color:#000;transform:scaleX(1.0553);letter-spacing:0.321px;">2048</div>
<div class="t" style="left:10px;top:570px;font-size:11px;font-weight:normal;color:#000;transform:scaleX(1.0453);letter-spacing:0.236px;">DOS Protection</div>
<div class="t" style="left:151px;top:570px;font-size:11px;font-weight:normal;color:#000;transform:scaleX(1.0517);letter-spacing:0.263px;">Max. connections</div>
<div class="t" style="left:306px;top:570px;font-size:11px;font-weight:normal;color:#000;transform:scaleX(1.0846);letter-spacing:0.394px;">maximum value (0 for unlimited)</div>
<div class="t" style="left:516px;top:570px;font-size:11px;font-weight:normal;color:#000;transform:scaleX(1.0060);letter-spacing:0.037px;">0</div>
<div class="t" style="left:151px;top:592px;font-size:11px;font-weight:normal;color:#000;transform:scaleX(1.0640);letter-spacing:0.321px;">Sample duration</div>
<div class="t" style="left:306px;top:592px;font-size:11px;font-weight:normal;color:#000;transform:scaleX(0.9967);letter-spacing:-0.019px;">sec</div>
<div class="t" style="left:516px;top:592px;font-size:11px;font-weight:normal;color:#000;transform:scaleX(1.0060);letter-spacing:0.037px;">1</div>
<div class="t" style="left:151px;top:614px;font-size:11px;font-weight:normal;color:#000;transform:scaleX(1.0664);letter-spacing:0.327px;">Hard max connection rate</div>
<div class="t" style="left:306px;top:614px;font-size:11px;font-weight:normal;color:#000;transform:scaleX(1.0701);letter-spacing:0.318px;">sessions per sample (0 for unlimited)</div>
<div class="t" style="left:516px;top:614px;font-size:11px;font-weight:normal;color:#000;transform:scaleX(1.0060);letter-spacing:0.037px;">0</div>
<div class="t" style="left:151px;top:636px;font-size:11px;font-weight:normal;color:#000;transform:scaleX(1.0697);letter-spacing:0.330px;">Soft max connection rate</div>
<div class="t" style="left:306px;top:636px;font-size:11px;font-weight:normal;color:#000;transform:scaleX(1.0701);letter-spacing:0.318px;">sessions per sample (0 for unlimited)</div>
<div class="t" style="left:516px;top:636px;font-size:11px;font-weight:normal;color:#000;transform:scaleX(1.0060);letter-spacing:0.037px;">0</div>
<div class="t" style="left:151px;top:658px;font-size:11px;font-weight:normal;color:#000;transform:scaleX(1.0678);letter-spacing:0.322px;">Defer time</div>
<div class="t" style="left:306px;top:658px;font-size:11px;font-weight:normal;color:#000;transform:scaleX(1.0756);letter-spacing:0.350px;">in microsec, 1.000.000 = 1 sec</div>
<div class="t" style="left:516px;top:658px;font-size:11px;font-weight:normal;color:#000;transform:scaleX(1.0609);letter-spacing:0.351px;">500000</div>
<div class="t" style="left:151px;top:680px;font-size:11px;font-weight:normal;color:#000;transform:scaleX(1.0577);letter-spacing:0.287px;">Hard excess signal program</div>
<div class="t" style="left:151px;top:702px;font-size:11px;font-weight:normal;color:#000;transform:scaleX(1.0605);letter-spacing:0.291px;">Soft excess signal program</div>
<div class="t" style="left:10px;top:724px;font-size:11px;font-weight:normal;color:#000;transform:scaleX(1.0440);letter-spacing:0.210px;">Access Control Lists</div>
<div class="t" style="left:151px;top:724px;font-size:11px;font-weight:normal;color:#000;transform:scaleX(1.0640);letter-spacing:0.325px;">New allow-from</div>
<div class="t" style="left:151px;top:746px;font-size:11px;font-weight:normal;color:#000;transform:scaleX(1.0636);letter-spacing:0.343px;">New deny-from</div>
<div class="t" style="left:10px;top:768px;font-size:11px;font-weight:normal;color:#000;transform:scaleX(1.0614);letter-spacing:0.287px;">Web interface credentials</div>
<div class="t" style="left:151px;top:768px;font-size:11px;font-weight:normal;color:#000;transform:scaleX(1.0611);letter-spacing:0.328px;">Format username:password</div>
<div class="t b" style="left:10px;top:806px;font-size:11px;font-weight:bold;color:#000;transform:scaleX(1.1142);letter-spacing:0.569px;">Back end 172.16.1.222:8888</div>
<div class="t" style="left:521px;top:806px;font-size:11px;font-weight:normal;color:#000;transform:scaleX(1.0425);letter-spacing:0.216px;">Delete</div>
<div class="t b" style="left:10px;top:825px;font-size:11px;font-weight:bold;color:#000;transform:scaleX(1.0961);letter-spacing:0.472px;">State</div>
<div class="t" style="left:151px;top:825px;font-size:11px;font-weight:normal;color:#000;transform:scaleX(1.0483);letter-spacing:0.244px;">Health</div>
<div class="t" style="left:306px;top:825px;font-size:11px;font-weight:normal;color:#000;transform:scaleX(1.0639);letter-spacing:0.271px;">alive, available</div>
<div class="t" style="left:151px;top:841px;font-size:11px;font-weight:normal;color:#000;transform:scaleX(1.0419);letter-spacing:0.224px;">Connections</div>
<div class="t" style="left:306px;top:841px;font-size:11px;font-weight:normal;color:#000;transform:scaleX(1.0060);letter-spacing:0.037px;">0</div>
<div class="t" style="left:151px;top:857px;font-size:11px;font-weight:normal;color:#000;transform:scaleX(1.0543);letter-spacing:0.256px;">Connect failures</div>
<div class="t" style="left:306px;top:857px;font-size:11px;font-weight:normal;color:#000;transform:scaleX(1.0060);letter-spacing:0.037px;">3</div>
<div class="t" style="left:151px;top:873px;font-size:11px;font-weight:normal;color:#000;transform:scaleX(1.0413);letter-spacing:0.230px;">Served</div>
<div class="t" style="left:306px;top:873px;font-size:11px;font-weight:normal;color:#000;transform:scaleX(1.0719);letter-spacing:0.324px;">1296 bytes, 12 clients</div>
<div class="t b" style="left:10px;top:892px;font-size:11px;font-weight:bold;color:#000;transform:scaleX(1.0630);letter-spacing:0.352px;">Options</div>
<div class="t" style="left:151px;top:892px;font-size:11px;font-weight:normal;color:#000;transform:scaleX(1.0541);letter-spacing:0.291px;">Weight</div>
<div class="t" style="left:516px;top:892px;font-size:11px;font-weight:normal;color:#000;transform:scaleX(1.0060);letter-spacing:0.037px;">1</div>
<div class="t" style="left:151px;top:914px;font-size:11px;font-weight:normal;color:#000;transform:scaleX(1.0517);letter-spacing:0.263px;">Max. connections</div>
<div class="t" style="left:306px;top:914px;font-size:11px;font-weight:normal;color:#000;transform:scaleX(1.0742);letter-spacing:0.338px;">unlimited</div>
<div class="t" style="left:516px;top:914px;font-size:11px;font-weight:normal;color:#000;transform:scaleX(1.0060);letter-spacing:0.037px;">0</div>
<div class="t b" style="left:586px;top:129px;font-size:11px;font-weight:bold;color:#000;transform:scaleX(1.0773);letter-spacing:0.423px;">Quick Overview</div>
<div class="t b" style="left:586px;top:161px;font-size:11px;font-weight:bold;color:#000;transform:scaleX(1.0624);letter-spacing:0.359px;">Back end</div>
<div class="t b" style="left:644px;top:161px;font-size:11px;font-weight:bold;color:#5a2a66;transform:scaleX(1.1372);letter-spacing:0.655px;text-decoration:underline;">172.16.1.222:8888</div>
<div class="t" style="left:776px;top:161px;font-size:11px;font-weight:normal;color:#000;transform:scaleX(1.0547);letter-spacing:0.244px;">up, alive, available, 0 connections</div>
<div class="t b" style="left:586px;top:177px;font-size:11px;font-weight:bold;color:#000;transform:scaleX(1.0624);letter-spacing:0.359px;">Back end</div>
<div class="t b" style="left:644px;top:177px;font-size:11px;font-weight:bold;color:#1a1a99;transform:scaleX(1.1373);letter-spacing:0.661px;text-decoration:underline;">192.168.1.161:5555</div>
<div class="t" style="left:776px;top:177px;font-size:11px;font-weight:normal;color:#000;transform:scaleX(1.0547);letter-spacing:0.244px;">up, alive, available, 0 connections</div>
<div class="t b" style="left:586px;top:208px;font-size:11px;font-weight:bold;color:#000;transform:scaleX(1.0832);letter-spacing:0.382px;">Activity</div>
<div class="t" style="left:586px;top:240px;font-size:11px;font-weight:normal;color:#000;transform:scaleX(1.0649);letter-spacing:0.327px;">Number of threads</div>
<div class="t" style="left:889px;top:240px;font-size:11px;font-weight:normal;color:#000;transform:scaleX(1.0060);letter-spacing:0.037px;">3</div>
<div class="t" style="left:586px;top:256px;font-size:11px;font-weight:normal;color:#000;transform:scaleX(1.0690);letter-spacing:0.305px;">Used file descriptors (approx.)</div>
<div class="t" style="left:889px;top:256px;font-size:11px;font-weight:normal;color:#000;transform:scaleX(1.0777);letter-spacing:0.412px;">11</div>
<div class="t" style="left:586px;top:272px;font-size:11px;font-weight:normal;color:#000;transform:scaleX(1.0717);letter-spacing:0.292px;">File descriptor limit</div>
<div class="t" style="left:889px;top:272px;font-size:11px;font-weight:normal;color:#000;transform:scaleX(1.0553);letter-spacing:0.321px;">1024</div>
<div class="t b" style="left:586px;top:288px;font-size:11px;font-weight:bold;color:#000;transform:scaleX(1.0731);letter-spacing:0.416px;">Thread</div>
<div class="t b" style="left:715px;top:288px;font-size:11px;font-weight:bold;color:#000;transform:scaleX(1.0745);letter-spacing:0.382px;">Description</div>
<div class="t b" style="left:821px;top:288px;font-size:11px;font-weight:bold;color:#000;transform:scaleX(1.0624);letter-spacing:0.359px;">Back end</div>
<div class="t b" style="left:889px;top:288px;font-size:11px;font-weight:bold;color:#000;transform:scaleX(1.0873);letter-spacing:0.454px;">Duration</div>
<div class="t" style="left:586px;top:304px;font-size:11px;font-weight:normal;color:#000;transform:scaleX(1.0676);letter-spacing:0.388px;">139691350001408</div>
<div class="t" style="left:715px;top:304px;font-size:11px;font-weight:normal;color:#000;transform:scaleX(1.0548);letter-spacing:0.288px;">Checkup thread</div>
<div class="t" style="left:889px;top:304px;font-size:11px;font-weight:normal;color:#000;transform:scaleX(1.0674);letter-spacing:0.354px;">1718.7</div>
<div class="t" style="left:586px;top:320px;font-size:11px;font-weight:normal;color:#000;transform:scaleX(1.0676);letter-spacing:0.388px;">139691360491264</div>
<div class="t" style="left:715px;top:320px;font-size:11px;font-weight:normal;color:#000;transform:scaleX(1.0612);letter-spacing:0.329px;">Wakeup thread</div>
<div class="t" style="left:889px;top:320px;font-size:11px;font-weight:normal;color:#000;transform:scaleX(1.0674);letter-spacing:0.354px;">1718.7</div>
<div class="t" style="left:586px;top:336px;font-size:11px;font-weight:normal;color:#000;transform:scaleX(1.0727);letter-spacing:0.411px;">139691370981120</div>
<div class="t" style="left:715px;top:336px;font-size:11px;font-weight:normal;color:#000;transform:scaleX(1.0576);letter-spacing:0.284px;">Web interface</div>
<div class="t" style="left:889px;top:336px;font-size:11px;font-weight:normal;color:#000;transform:scaleX(1.0682);letter-spacing:0.363px;">1718.71</div>
<div class="t" style="left:40px;top:3px;font-size:12px;font-weight:normal;color:#333;letter-spacing:-0.299px;">XR Status Overview</div>
<div class="t" style="left:1133px;top:0px;font-size:12px;font-weight:bold;color:#fff;letter-spacing:-0.621px;">thilina</div>
<div class="t" style="left:121px;top:33px;font-size:15px;font-weight:normal;color:#202020;letter-spacing:0.034px;">172.16.1.204</div>
<div class="t" style="left:208px;top:33px;font-size:15px;font-weight:normal;color:#8a8a8a;letter-spacing:0.091px;">:8010</div>
<div class="t" style="left:29px;top:61px;font-size:12px;font-weight:normal;color:#2d3a55;letter-spacing:-0.090px;">Apps</div>
<div class="t" style="left:88px;top:61px;font-size:12px;font-weight:normal;color:#222;letter-spacing:-0.338px;">Linux</div>
<div class="t" style="left:149px;top:61px;font-size:12px;font-weight:normal;color:#222;letter-spacing:-0.836px;">DB</div>
<div class="t" style="left:197px;top:61px;font-size:12px;font-weight:normal;color:#222;letter-spacing:-0.754px;">JIRA</div>
<div class="t" style="left:254px;top:61px;font-size:12px;font-weight:normal;color:#222;letter-spacing:0.197px;">Other</div>
<div class="t" style="left:318px;top:61px;font-size:12px;font-weight:normal;color:#222;letter-spacing:-0.138px;">JAVA and webservers</div>
<div class="t" style="left:464px;top:61px;font-size:12px;font-weight:normal;color:#222;letter-spacing:-0.955px;">CODEGEN</div>
<div class="t" style="left:1179px;top:61px;font-size:12px;font-weight:normal;color:#222;letter-spacing:-0.003px;">Other bookmarks</div>
</body></html>
